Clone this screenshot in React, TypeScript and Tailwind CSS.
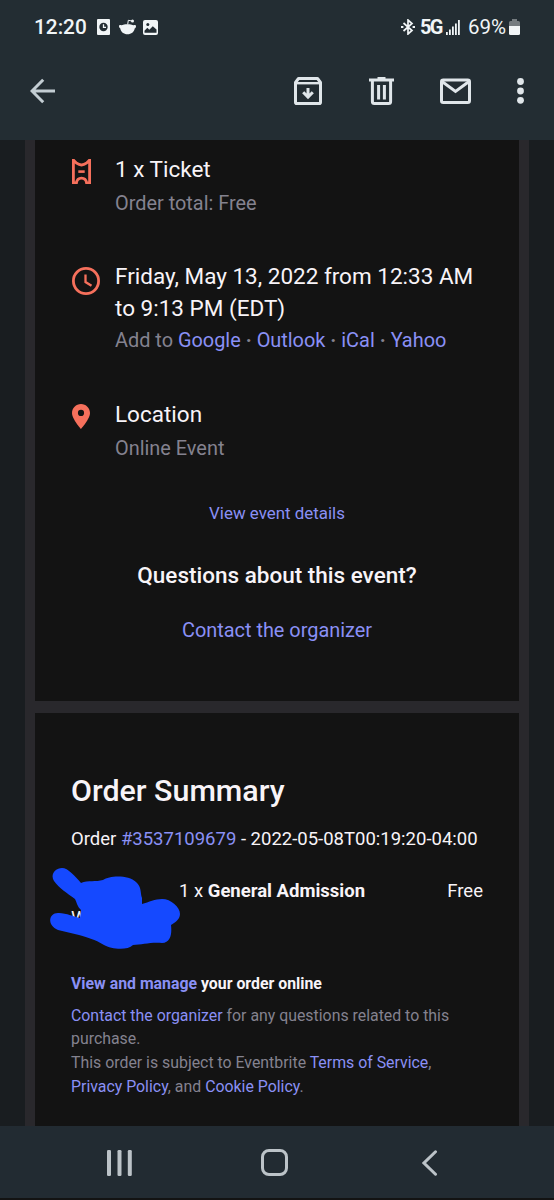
import React from 'react';

interface LinkProps {
  children: React.ReactNode;
}

const Link: React.FC<LinkProps> = ({ children }) => (
  <a href="#" className="text-[#8a90f5]">{children}</a>
);

const Dot: React.FC = () => <span className="font-bold"> · </span>;

const StatusBar: React.FC = () => (
  <div className="flex h-[54px] items-center justify-between pl-[34px] pr-[34px] text-[#f1f5f7]">
    <div className="flex items-center">
      <span className="w-[53px] whitespace-nowrap text-[20.8px] font-medium leading-6">12:20</span>
      <svg className="ml-[10px] h-4 w-[13px]" viewBox="0 0 13 16">
        <rect width="13" height="16" rx="1" fill="currentColor" />
        <circle cx="6.5" cy="8" r="4.2" fill="#232d33" />
        <path d="M6.5 5.3V8.3H9" fill="none" stroke="currentColor" strokeWidth="1.3" />
      </svg>
      <svg className="ml-[9px] h-4 w-[17px]" viewBox="0 0 17 16">
        <path d="M0 7.2C0 6 1.2 5.8 2.2 6.3C5.5 4.8 11.5 4.8 14.8 6.3C15.8 5.8 17 6 17 7.4C17 8.5 16.2 9 15.8 9.3C15.2 13 12.3 15.3 8.5 15.3S1.8 13 1.2 9.3C.6 9 0 8.3 0 7.2Z" fill="currentColor" />
        <path d="M8.7 5.5L9.3 1.3L13 2" fill="none" stroke="currentColor" strokeWidth="1" />
        <circle cx="13.5" cy="2.1" r="1.5" fill="currentColor" />
      </svg>
      <svg className="ml-[7px] h-[15px] w-[15px]" viewBox="0 0 15 15">
        <rect width="15" height="15" rx="2" fill="currentColor" />
        <circle cx="4.8" cy="4.5" r="1.5" fill="#232d33" />
        <path d="M1.5 12.8V10.7L4.3 7.8L6.3 9.7L9.8 6.2L13.5 9.5V12.8Z" fill="#232d33" />
      </svg>
    </div>
    <div className="flex items-center">
      <svg className="h-4 w-[14px]" viewBox="0 0 14 16" fill="none" stroke="currentColor" strokeWidth="1.7">
        <path d="M2.5 4L11 11.5L7 15V1L11 4.5L2.5 12" />
        <path d="M0 8H2.4M11.6 8H14" strokeWidth="2" />
      </svg>
      <span className="ml-[5px] w-[24px] whitespace-nowrap text-[20px] font-bold leading-6 tracking-[-1.8px]">5G</span>
      <svg className="ml-[2px] h-[15px] w-[14px]" viewBox="0 0 14 15" fill="currentColor">
        <rect x="0" y="12" width="1.8" height="3" />
        <rect x="3" y="9.5" width="1.8" height="5.5" />
        <rect x="6" y="6.5" width="1.8" height="8.5" />
        <rect x="9" y="3.5" width="1.8" height="11.5" />
        <rect x="12" y="0" width="1.8" height="15" />
      </svg>
      <span className="ml-[8px] w-[40px] whitespace-nowrap text-[20.5px] leading-6">69%</span>
      <svg className="ml-[1px] h-4 w-[11px]" viewBox="0 0 11 16">
        <path d="M3 0H8V2H9.5Q11 2 11 3.5V7H0V3.5Q0 2 1.5 2H3Z" fill="#757c80" />
        <path d="M0 7H11V14.5Q11 16 9.5 16H1.5Q0 16 0 14.5Z" fill="currentColor" />
      </svg>
    </div>
  </div>
);

const Toolbar: React.FC = () => (
  <div className="flex h-[74px] items-center pl-[30px] pr-[30px] text-[#e0e6ea]">
    <svg className="-mt-px h-[26px] w-[25px] text-[#c3cdd3]" viewBox="0 0 25 26" fill="none" stroke="currentColor" strokeWidth="3">
      <path d="M13.2 1.7L2 13L13.2 24.3M2 13H25" />
    </svg>
    <svg className="ml-auto h-7 w-7" viewBox="0 0 28 28" fill="none" stroke="currentColor" strokeWidth="3" strokeLinejoin="round">
      <path d="M1.5 5.5L4.5 1.5H23.5L26.5 5.5V25.2Q26.5 26.5 25.2 26.5H2.8Q1.5 26.5 1.5 25.2Z" />
      <path d="M2 6.2H26" strokeWidth="2.4" />
      <path d="M14 11V20M9.2 15.3L14 20.1L18.8 15.3" strokeLinejoin="miter" />
    </svg>
    <svg className="ml-[47px] h-7 w-[25px]" viewBox="0 0 25 28" fill="none" stroke="currentColor" strokeWidth="3">
      <path d="M0 3H25M8.5 1.5H16.5" />
      <path d="M3.4 3V24.5Q3.4 26.5 5.4 26.5H19.6Q21.6 26.5 21.6 24.5V3" />
      <path d="M9.6 8V22.5M15.4 8V22.5" />
    </svg>
    <svg className="ml-[46px] h-[26px] w-[31px]" viewBox="0 0 31 26" fill="none" stroke="currentColor" strokeWidth="3" strokeLinejoin="round">
      <rect x="1.5" y="1.9" width="28" height="22.6" rx="1.8" />
      <path d="M2 3.5L15.5 13.5L29 3.5" strokeLinejoin="miter" />
    </svg>
    <svg className="ml-[46px] h-[26px] w-[7px]" viewBox="0 0 7 26" fill="currentColor">
      <circle cx="3.5" cy="3.5" r="3.4" />
      <circle cx="3.5" cy="13" r="3.4" />
      <circle cx="3.5" cy="22.3" r="3.4" />
    </svg>
  </div>
);

const TicketIcon: React.FC = () => (
  <svg className="mt-[6px] ml-[1px] h-[25px] w-[19px]" viewBox="0 0 19 25" fill="none" stroke="#f6705c" strokeWidth="2.8">
    <path d="M1.4 1V24H4.4C4.8 20.8 6.8 19.2 9.5 19.2S14.2 20.8 14.6 24H17.6V1L14.4 4.2Q9.5 7.8 4.6 4.2Z" />
    <path d="M6.3 12.6H12.7" strokeWidth="2.6" />
  </svg>
);

const ClockIcon: React.FC = () => (
  <svg className="mt-[7px] ml-[1px] h-7 w-7" viewBox="0 0 28 28" fill="none" stroke="#f6705c" strokeWidth="2.8">
    <circle cx="14" cy="14" r="12.6" />
    <path d="M13.5 7.5V15L19.5 18.8" strokeWidth="2.3" />
  </svg>
);

const PinIcon: React.FC = () => (
  <svg className="mt-[6px] ml-[1px] h-[25px] w-[18px]" viewBox="0 0 18 25">
    <path d="M9 0C4 0 0 4 0 9C0 15 9 25 9 25S18 15 18 9C18 4 14 0 9 0ZM9 5.8A3.1 3.1 0 1 1 9 12A3.1 3.1 0 1 1 9 5.8Z" fill="#f6705c" fillRule="evenodd" />
  </svg>
);

const EventCard: React.FC = () => (
  <section className="h-[561px] bg-[#131313] px-9 pt-[13px]">
    <div className="flex">
      <div className="w-11 shrink-0"><TicketIcon /></div>
      <div>
        <p className="text-[22.5px] leading-8 text-[#f8f4f8]">1 x Ticket</p>
        <p className="mt-[3px] text-[19.9px] leading-8 text-[#84828f]">Order total: Free</p>
      </div>
    </div>
    <div className="mt-[40px] flex">
      <div className="w-11 shrink-0"><ClockIcon /></div>
      <div className="whitespace-nowrap">
        <p className="text-[22.5px] leading-8 text-[#f8f4f8]">
          Friday, May 13, 2022 from 12:33 AM<br />to 9:13 PM (EDT)
        </p>
        <p className="mt-px text-[19.9px] leading-8 text-[#84828f]">
          Add to <Link>Google</Link><Dot /><Link>Outlook</Link><Dot /><Link>iCal</Link><Dot /><Link>Yahoo</Link>
        </p>
      </div>
    </div>
    <div className="mt-[41px] flex">
      <div className="w-11 shrink-0"><PinIcon /></div>
      <div>
        <p className="text-[22.5px] leading-8 text-[#f8f4f8]">Location</p>
        <p className="mt-[3px] text-[19.9px] leading-8 text-[#84828f]">Online Event</p>
      </div>
    </div>
    <div className="mt-[36px] text-center">
      <p className="text-[16.9px] leading-6"><Link>View event details</Link></p>
      <h2 className="mt-[34px] text-[22.5px] font-medium leading-8 text-[#f8f4f8]">Questions about this event?</h2>
      <p className="mt-[24px] text-[19.9px] leading-8"><Link>Contact the organizer</Link></p>
    </div>
  </section>
);

// Marker strokes hiding the buyer's name
const Scribble: React.FC = () => (
  <svg className="absolute -left-[21px] -top-[12px] h-[83px] w-[132px]" viewBox="50 867 132 83" fill="#1549ff">
    <path d="M62 868C68 868 75 876 81 883C88 880 96 882 103 880C110 875 129 875 136 882C142 887 140 893 142 898V904C149 902 155 899 162 899C171 899 180 907 180 914C180 920 174 923 171 925C172 933 171 943 162 943C150 942 142 945 133 945C127 951 111 949 104 945C94 939 89 938 79 935L58 930C46 925 49 912 59 913C66 913 75 917 80 918L81 910C77 906 77 903 75 899C67 893 59 888 54 881C50 875 55 868 62 868Z" />
  </svg>
);

const OrderCard: React.FC = () => (
  <section className="h-[413px] bg-[#131313] px-9 pt-[58px] text-[#f8f4f8]">
    <h1 className="text-[30.4px] font-medium leading-10">Order Summary</h1>
    <p className="mt-[16px] whitespace-nowrap text-[18.5px] leading-6">
      Order <Link>#3537109679</Link> - 2022-05-08T00:19:20-04:00
    </p>
    <div className="relative mt-[28px] flex h-12 text-[18.5px] leading-6">
      <span className="w-[108px] pt-[27px]">W</span>
      <span>1 x <b className="font-bold">General Admission</b></span>
      <span className="ml-auto">Free</span>
      <Scribble />
    </div>
    <p className="mt-[45px] text-[15.85px] font-bold leading-6"><Link>View and manage</Link> your order online</p>
    <p className="mt-[7.6px] whitespace-nowrap text-[15.87px] leading-[23.8px] text-[#84828f]">
      <Link>Contact the organizer</Link> for any questions related to this<br />purchase.<br />
      This order is subject to Eventbrite <Link>Terms of Service</Link>,<br />
      <Link>Privacy Policy</Link>, and <Link>Cookie Policy</Link>.
    </p>
  </section>
);

const NavBar: React.FC = () => (
  <nav className="flex h-[72px] items-center bg-[#222b32] pl-[107px] text-[#bcc3c8]">
    <svg className="mt-[2px] h-[26px] w-[25px]" viewBox="0 0 25 26" fill="currentColor">
      <rect x="0" y="0" width="4" height="26" rx="1.3" />
      <rect x="10.5" y="0" width="4" height="26" rx="1.3" />
      <rect x="20.8" y="0" width="4" height="26" rx="1.3" />
    </svg>
    <span className="ml-[129px] mt-[1px] h-[27px] w-[27px] rounded-[8px] border-[3px] border-current" />
    <svg className="ml-[134px] mt-[2px] h-[26px] w-[16px]" viewBox="0 0 16 26" fill="none" stroke="currentColor" strokeWidth="3">
      <path d="M13.5 1.8L2 13L13.5 24.2" strokeLinecap="round" />
    </svg>
  </nav>
);

const App: React.FC = () => {
  return (
    <div className="flex h-[1200px] w-[554px] flex-col overflow-hidden bg-[#131313] font-[Roboto,sans-serif]">
      <header className="h-[140px] shrink-0 bg-[#232d33]">
        <StatusBar />
        <Toolbar />
      </header>
      <main className="h-[986px] shrink-0 bg-[#191d20] px-[25px]">
        <div className="flex h-full flex-col gap-3 bg-[#29282c] px-[10px]">
          <EventCard />
          <OrderCard />
        </div>
      </main>
      <NavBar />
    </div>
  );
};

export default App;
